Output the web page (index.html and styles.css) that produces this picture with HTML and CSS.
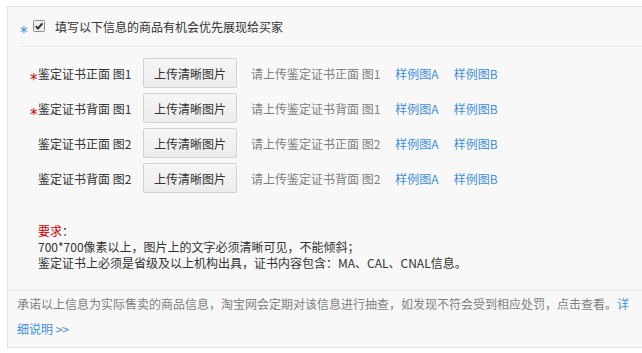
FILE: index.html
```html
<!DOCTYPE html>
<html lang="zh-CN">
<head>
<meta charset="utf-8">
<link rel="stylesheet" href="styles.css">
</head>
<body>
<div class="panel">
  <div class="opt-row">
    <span class="star star-blue">*</span>
    <span class="cb"><svg width="12" height="12" viewBox="0 0 12 12"><rect x="0.5" y="0.5" width="11" height="11" rx="1" fill="#eeeeee" stroke="#8e8e8e"/><path d="M2.8 6.2 L5 8.6 L9.3 3.3" fill="none" stroke="#2b2b2b" stroke-width="1.9"/></svg></span>
    <span class="opt-text">填写以下信息的商品有机会优先展现给买家</span>
  </div>
  <div class="fields">
    <div class="field">
      <span class="label"><span class="star star-red">*</span>鉴定证书正面 图1</span>
      <button class="upload">上传清晰图片</button>
      <span class="hint">请上传鉴定证书正面 图1</span>
      <a class="link" href="#">样例图A</a>
      <a class="link" href="#">样例图B</a>
    </div>
    <div class="field">
      <span class="label"><span class="star star-red">*</span>鉴定证书背面 图1</span>
      <button class="upload">上传清晰图片</button>
      <span class="hint">请上传鉴定证书背面 图1</span>
      <a class="link" href="#">样例图A</a>
      <a class="link" href="#">样例图B</a>
    </div>
    <div class="field">
      <span class="label"><span class="star"></span>鉴定证书正面 图2</span>
      <button class="upload">上传清晰图片</button>
      <span class="hint">请上传鉴定证书正面 图2</span>
      <a class="link" href="#">样例图A</a>
      <a class="link" href="#">样例图B</a>
    </div>
    <div class="field">
      <span class="label"><span class="star"></span>鉴定证书背面 图2</span>
      <button class="upload">上传清晰图片</button>
      <span class="hint">请上传鉴定证书背面 图2</span>
      <a class="link" href="#">样例图A</a>
      <a class="link" href="#">样例图B</a>
    </div>
  </div>
  <div class="req">
    <div><span class="req-title">要求</span>：</div>
    <div>700*700像素以上，图片上的文字必须清晰可见，不能倾斜；</div>
    <div>鉴定证书上必须是省级及以上机构出具，证书内容包含：MA、CAL、CNAL信息。</div>
  </div>
  <div class="footer">承诺以上信息为实际售卖的商品信息，淘宝网会定期对该信息进行抽查，如发现不符会受到相应处罚，点击查看。<a class="link" href="#">详细说明 &gt;&gt;</a></div>
</div>
</body>
</html>
```

FILE: styles.css
```css
html, body {
  margin: 0;
  padding: 0;
  overflow: hidden;
  background: #fff;
}
body {
  font-family: "Noto Sans CJK SC", "Noto Sans", sans-serif;
  font-size: 12px;
  color: #333;
  width: 642px;
  height: 353px;
}
.panel {
  margin: 6px 0 0 7px;
  width: 650px;
  background: #f8f8f8;
  border: 1px solid #e2e2e2;
  box-sizing: border-box;
}
.opt-row {
  display: flex;
  align-items: center;
  height: 39px;
  margin-left: 12px;
  border-bottom: 1px solid #e6e6e6;
  box-shadow: 0 1px 0 #fff;
}
.star {
  display: inline-block;
  width: 8px;
  font-family: "DejaVu Sans", sans-serif;
  font-size: 15px;
  line-height: 12px;
  position: relative;
  top: 6px;
}
.star-blue { color: #3d8fe0; }
.star-red { color: #d40000; }
.cb {
  display: inline-flex;
  margin-left: 5px;
  position: relative;
  top: -1px;
}
.opt-text {
  margin-left: 10px;
}
.fields {
  display: flex;
  flex-direction: column;
  gap: 5px;
  margin-top: 11px;
}
.field {
  display: flex;
  align-items: center;
  height: 30px;
  padding-left: 22px;
}
.label {
  width: 113px;
  flex: none;
  white-space: nowrap;
}
.upload {
  width: 94px;
  height: 30px;
  flex: none;
  font-family: inherit;
  font-size: 12px;
  color: #333;
  background: linear-gradient(#f6f6f6, #ececec);
  border: 1px solid #d2d2d2;
  border-radius: 2px;
  padding: 0;
}
.hint {
  margin-left: 14px;
  color: #808080;
  white-space: nowrap;
}
.link {
  color: #3d8fe0;
  text-decoration: none;
}
.field .link {
  margin-left: 15px;
  white-space: nowrap;
}
.req {
  margin: 30px 0 19px 30px;
  line-height: 16px;
  color: #333;
}
.req-title { color: #cc0000; }
.footer {
  border-top: 1px solid #e6e6e6;
  padding: 0 25px 6px 9px;
  line-height: 25px;
  color: #808080;
}
```
